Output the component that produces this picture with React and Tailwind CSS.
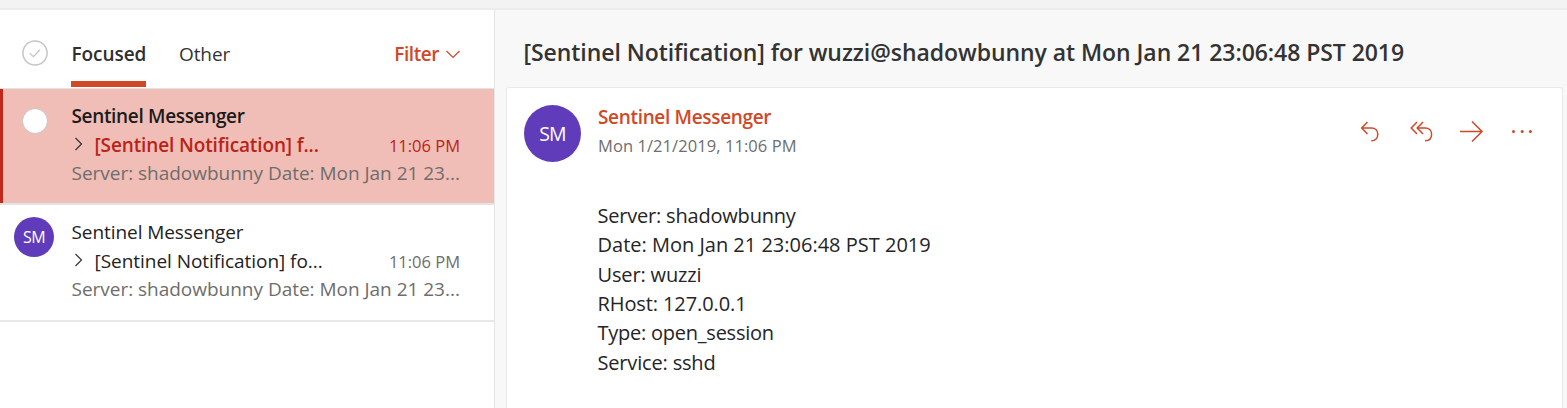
function Chevron({ className, d, box = "0 0 16 16" }) {
  return (
    <svg className={className} viewBox={box} fill="none" stroke="currentColor" strokeWidth="1.2">
      <path d={d} />
    </svg>
  );
}

function MessageRow({ selected, subject }) {
  return (
    <div
      className={
        selected
          ? "flex h-[114px] border-l-[3px] border-[#c0281c] bg-[#f0beb6] pl-[11.5px]"
          : "flex h-[115px] bg-white pl-[14.5px]"
      }
    >
      <div className="w-[57px] shrink-0">
        {selected ? (
          <div className="mt-[19px] ml-[7.5px] size-[26px] rounded-full border-[1.5px] border-[#c8c6c4] bg-white" />
        ) : (
          <div className="mt-[12px] -ml-[0.5px] flex size-[40px] items-center justify-center rounded-full bg-[#603cba] text-[16px] tracking-[-0.5px] text-white">
            SM
          </div>
        )}
      </div>
      <div className="w-[388.5px] pt-[13px]">
        <div
          className={
            selected
              ? "h-[29px] leading-[29px] font-semibold tracking-[-0.34px] text-[#1b1b1b]"
              : "h-[29px] leading-[29px] tracking-[-0.07px] text-[#222]"
          }
        >
          Sentinel Messenger
        </div>
        <div className="flex h-[29px] items-baseline leading-[29px]">
          <Chevron className="mr-[11px] ml-[2px] h-[16px] w-[10px] shrink-0 text-[#333]" box="0 0 10 16" d="M1.5 2 L7.5 8 L1.5 14" />
          <span
            className={
              selected
                ? "grow font-semibold tracking-[-0.13px] text-[#ba2318]"
                : "grow tracking-[-0.04px] text-[#222]"
            }
          >
            {subject}
          </span>
          <span className={selected ? "text-[16.5px] text-[#ba2318]" : "text-[16.5px] text-[#6e6e6e]"}>
            11:06 PM
          </span>
        </div>
        <div className="h-[26px] leading-[26px] tracking-[-0.02px] whitespace-nowrap text-[#6f6d6c]">
          Server: shadowbunny Date: Mon Jan 21 23...
        </div>
      </div>
    </div>
  );
}

const lines = [
  ["Server: shadowbunny", "tracking-[-0.2px]"],
  ["Date: Mon Jan 21 23:06:48 PST 2019", "tracking-[0px]"],
  ["User: wuzzi", "tracking-[-0.15px]"],
  ["RHost: 127.0.0.1", "tracking-[-0.1px]"],
  ["Type: open_session", "tracking-[-0.24px]"],
  ["Service: sshd", "tracking-[-0.17px]"],
];

export default function App() {
  return (
    <div className="flex h-[408px] w-[1567px] flex-col overflow-hidden bg-[#f8f8f8] font-['Open_Sans','Noto_Sans',sans-serif] text-[19px] whitespace-nowrap">
      <div className="h-[10px] shrink-0 border-b-2 border-[#ececec] bg-[#f3f3f3]" />
      <div className="flex grow">
        <div className="w-[495px] shrink-0 border-r border-[#e6e6e6] bg-white">
          <div className="flex h-[79px] border-b border-[#e2e2e2] pl-[22px]">
            <svg className="mt-[30px] size-[26px]" viewBox="0 0 26 26" fill="none" stroke="#c8c6c4">
              <circle cx="13" cy="13" r="12.1" strokeWidth="1.5" />
              <path d="M7.8 13.3 L11.3 16.6 L18 9.7" strokeWidth="1.3" />
            </svg>
            <div className="ml-[23px] flex h-[77px] w-[75px] flex-col justify-between">
              <div className="mt-[30px] h-[29px] pl-[0.5px] leading-[29px] font-semibold tracking-[-0.05px] text-[#2f2f2f]">Focused</div>
              <div className="h-[6px] bg-[#d24726]" />
            </div>
            <div className="mt-[30px] ml-[33px] h-[29px] leading-[29px] tracking-[-0.1px] text-[#333]">Other</div>
            <div className="mt-[30px] mr-[34px] ml-auto flex h-[29px] items-center leading-[29px] font-semibold tracking-[-0.45px] text-[#d24726]">
              Filter
              <Chevron className="ml-[7px] h-[16px] w-[14px] -translate-y-[1px]" box="0 0 14 16" d="M0.5 5 L7 11.5 L13.5 5" />
            </div>
          </div>
          <MessageRow selected subject="[Sentinel Notification] f..." />
          <div className="h-[2px] bg-[#e3e3e3]" />
          <MessageRow subject="[Sentinel Notification] fo..." />
          <div className="h-[2px] bg-[#e8e8e8]" />
        </div>
        <div className="flex grow flex-col pr-[4px] pl-[11px]">
          <div className="h-[77px] pt-[27px] pl-[17.5px] text-[23px] leading-[30px] font-semibold tracking-[-0.06px] text-[#333]">
            [Sentinel Notification] for wuzzi@shadowbunny at Mon Jan 21 23:06:48 PST 2019
          </div>
          <div className="grow rounded-t-[3px] border border-b-0 border-[#e9e9e9] bg-white pl-[17px]">
            <div className="flex h-[113px] pt-[17px]">
              <div className="flex size-[57px] items-center justify-center rounded-full bg-[#603cba] text-[19.5px] tracking-[-0.8px] text-white">
                SM
              </div>
              <div className="-mt-[2px] ml-[17px]">
                <div className="h-[28px] leading-[29px] font-semibold tracking-[-0.33px] text-[#d24726]">Sentinel Messenger</div>
                <div className="h-[29px] text-[16.5px] leading-[29px] tracking-[0.07px] text-[#6e6e6e]">Mon 1/21/2019, 11:06 PM</div>
              </div>
              <svg className="mt-[15px] mr-[30px] ml-auto h-[24px] w-[172px]" viewBox="0 0 172 24" fill="none" stroke="#d24726" strokeWidth="1.5">
                <path d="M7.5 2 L1.7 8 L7.5 14 M1.7 8 H11.5 C15.5 8 17.8 10.8 17.8 14.3 C17.8 18 15.5 20.8 11.3 20.8" />
                <path d="M57 2 L51.2 8 L57 14 M63 2 L57.2 8 L63 14 M57.2 8 H65.3 C69.3 8 71.6 10.8 71.6 14.3 C71.6 18 69.3 20.8 65 20.8" />
                <path d="M100 11.5 H122 M112 1.5 L122 11.5 L112 21.5" />
                <g fill="#d24726" stroke="none">
                  <circle cx="153.5" cy="11.5" r="1.5" />
                  <circle cx="162.2" cy="11.5" r="1.5" />
                  <circle cx="170.4" cy="11.5" r="1.5" />
                </g>
              </svg>
            </div>
            <div className="pl-[73.5px] text-[20px] leading-[29.33px] text-[#252525]">
              {lines.map(([line, tracking]) => (
                <div key={line} className={tracking}>{line}</div>
              ))}
            </div>
          </div>
        </div>
      </div>
    </div>
  );
}
